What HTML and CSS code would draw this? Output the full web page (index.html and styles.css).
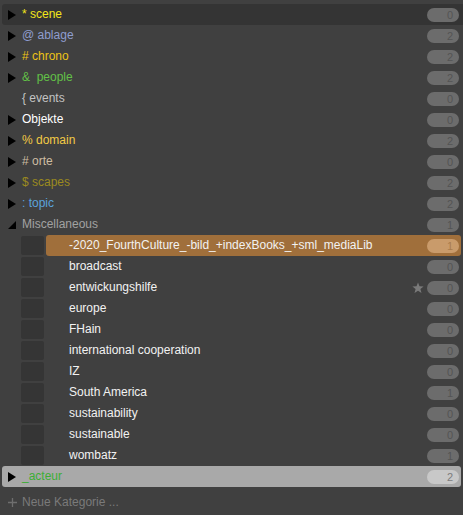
FILE: index.html
```html
<!DOCTYPE html>
<html>
<head>
<meta charset="utf-8">
<link rel="stylesheet" href="styles.css">
</head>
<body>
<div class="list">
  <div class="row top selected-dark">
    <svg class="arrow" viewBox="0 0 8 10"><polygon points="0,0 8,5 0,10"/></svg>
    <span class="label c-scene">* scene</span>
    <span class="badge">0</span>
  </div>
  <div class="row top">
    <svg class="arrow" viewBox="0 0 8 10"><polygon points="0,0 8,5 0,10"/></svg>
    <span class="label c-ablage">@ ablage</span>
    <span class="badge">2</span>
  </div>
  <div class="row top">
    <svg class="arrow" viewBox="0 0 8 10"><polygon points="0,0 8,5 0,10"/></svg>
    <span class="label c-chrono"># chrono</span>
    <span class="badge">2</span>
  </div>
  <div class="row top">
    <svg class="arrow" viewBox="0 0 8 10"><polygon points="0,0 8,5 0,10"/></svg>
    <span class="label c-people">&amp;&nbsp; people</span>
    <span class="badge">2</span>
  </div>
  <div class="row top">
    <span class="arrow-space"></span>
    <span class="label c-events">{ events</span>
    <span class="badge">0</span>
  </div>
  <div class="row top">
    <svg class="arrow" viewBox="0 0 8 10"><polygon points="0,0 8,5 0,10"/></svg>
    <span class="label c-objekte">Objekte</span>
    <span class="badge">0</span>
  </div>
  <div class="row top">
    <svg class="arrow" viewBox="0 0 8 10"><polygon points="0,0 8,5 0,10"/></svg>
    <span class="label c-domain">% domain</span>
    <span class="badge">2</span>
  </div>
  <div class="row top">
    <svg class="arrow" viewBox="0 0 8 10"><polygon points="0,0 8,5 0,10"/></svg>
    <span class="label c-orte"># orte</span>
    <span class="badge">0</span>
  </div>
  <div class="row top">
    <svg class="arrow" viewBox="0 0 8 10"><polygon points="0,0 8,5 0,10"/></svg>
    <span class="label c-scapes">$ scapes</span>
    <span class="badge">2</span>
  </div>
  <div class="row top">
    <svg class="arrow" viewBox="0 0 8 10"><polygon points="0,0 8,5 0,10"/></svg>
    <span class="label c-topic">: topic</span>
    <span class="badge">2</span>
  </div>
  <div class="row top">
    <svg class="arrow" viewBox="0 0 8 10"><polygon points="8,1 8,9 0,9"/></svg>
    <span class="label c-misc">Miscellaneous</span>
    <span class="badge">1</span>
  </div>

  <div class="row child">
    <span class="check"></span>
    <div class="item active">
      <span class="label">-2020_FourthCulture_-bild_+indexBooks_+sml_mediaLib</span>
      <span class="badge">1</span>
    </div>
  </div>
  <div class="row child">
    <span class="check"></span>
    <div class="item"><span class="label">broadcast</span><span class="badge">0</span></div>
  </div>
  <div class="row child">
    <span class="check"></span>
    <div class="item"><span class="label">entwickungshilfe</span>
      <svg class="star" viewBox="0 0 12 12"><polygon points="6,0.5 7.5,4.3 11.6,4.5 8.4,7.1 9.5,11.1 6,8.8 2.5,11.1 3.6,7.1 0.4,4.5 4.5,4.3"/></svg>
      <span class="badge">0</span></div>
  </div>
  <div class="row child">
    <span class="check"></span>
    <div class="item"><span class="label">europe</span><span class="badge">0</span></div>
  </div>
  <div class="row child">
    <span class="check"></span>
    <div class="item"><span class="label">FHain</span><span class="badge">0</span></div>
  </div>
  <div class="row child">
    <span class="check"></span>
    <div class="item"><span class="label">international cooperation</span><span class="badge">0</span></div>
  </div>
  <div class="row child">
    <span class="check"></span>
    <div class="item"><span class="label">IZ</span><span class="badge">0</span></div>
  </div>
  <div class="row child">
    <span class="check"></span>
    <div class="item"><span class="label">South America</span><span class="badge">1</span></div>
  </div>
  <div class="row child">
    <span class="check"></span>
    <div class="item"><span class="label">sustainability</span><span class="badge">0</span></div>
  </div>
  <div class="row child">
    <span class="check"></span>
    <div class="item"><span class="label">sustainable</span><span class="badge">0</span></div>
  </div>
  <div class="row child">
    <span class="check"></span>
    <div class="item"><span class="label">wombatz</span><span class="badge">1</span></div>
  </div>

  <div class="row top acteur">
    <svg class="arrow" viewBox="0 0 8 10"><polygon points="0,0 8,5 0,10"/></svg>
    <span class="label c-acteur">_acteur</span>
    <span class="badge">2</span>
  </div>

  <div class="row top add">
    <svg class="plus" viewBox="0 0 9 9"><path d="M4.5 0V9M0 4.5H9"/></svg>
    <span class="label c-add">Neue Kategorie ...</span>
  </div>
</div>
</body>
</html>
```

FILE: styles.css
```css
html, body {
  margin: 0;
  padding: 0;
  background: #404040;
  width: 463px;
  height: 515px;
  overflow: hidden;
}

.list {
  padding-top: 4px;
  font-family: "Liberation Sans", Arial, sans-serif;
  font-size: 12px;
}

.row {
  display: flex;
  align-items: center;
  height: 21px;
  box-sizing: border-box;
}

.top {
  margin: 0 2px 0 2px;
  padding: 0 2px 0 6px;
  border-radius: 3px;
}

.selected-dark {
  background: #343434;
  margin-right: 0;
  padding-right: 4px;
  border-radius: 3px 0 0 3px;
}

.arrow {
  width: 8px;
  height: 10px;
  flex: none;
  fill: #000;
  margin-right: 6px;
}

.arrow-space {
  width: 8px;
  flex: none;
  margin-right: 6px;
}

.label {
  white-space: nowrap;
  line-height: 21px;
}

.badge {
  margin-left: auto;
  flex: none;
  width: 32px;
  height: 14px;
  border-radius: 7px;
  background: #6c6c6c;
  color: #545454;
  font-size: 11px;
  line-height: 14px;
  text-align: right;
  padding-right: 6px;
  box-sizing: border-box;
}

.c-scene { color: #f2e51a; }
.c-ablage { color: #8f9dcf; }
.c-chrono { color: #ecc316; }
.c-people { color: #62c147; }
.c-events { color: #c3c3c3; }
.c-objekte { color: #ffffff; }
.c-domain { color: #f2ca45; }
.c-orte { color: #cdbda3; }
.c-scapes { color: #9b8a1f; }
.c-topic { color: #5ba2dc; }
.c-misc { color: #a2a2a2; }
.c-acteur { color: #3cae36; }
.c-add { color: #7a7a7a; }

.child {
  padding-left: 21px;
  padding-right: 2px;
}

.check {
  flex: none;
  width: 23px;
  height: 19px;
  background: #353535;
  border-radius: 2px;
  margin-right: 2px;
}

.item {
  flex: 1;
  display: flex;
  align-items: center;
  height: 21px;
  padding-left: 23px;
  padding-right: 2px;
  border-radius: 3px;
  color: #f2f2f2;
}

.item.active {
  background: #a06f3b;
}

.item.active .badge {
  background: #c99b6b;
  color: #a87b4d;
}

.star {
  margin-left: auto;
  width: 12px;
  height: 12px;
  fill: #7a7a7a;
  margin-right: 3px;
  flex: none;
}

.star + .badge {
  margin-left: 0;
}

.acteur {
  background: #a9a9a9;
  margin-right: 2px;
}

.acteur .badge {
  background: #c8c8c8;
  color: #7c7c7c;
}

.add {
  margin-top: 5px;
}

.plus {
  width: 9px;
  height: 9px;
  flex: none;
  stroke: #6e6e6e;
  stroke-width: 1.3;
  margin-right: 5px;
}
```
